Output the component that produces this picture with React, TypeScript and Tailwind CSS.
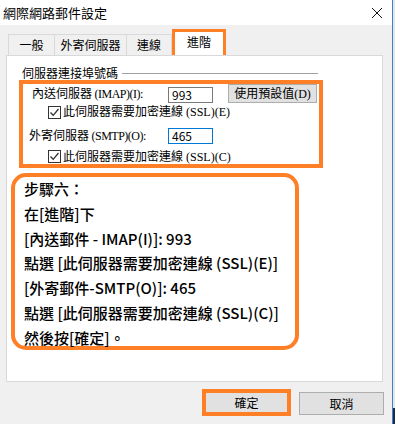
import React from 'react';

const ui = { fontFamily: '"Noto Sans CJK TC", "Noto Sans", sans-serif' };
const ming = { fontFamily: '"Liberation Serif", "Noto Sans CJK TC", serif' };

function Check() {
  return (
    <span className="flex h-[13px] w-[13px] items-center justify-center border border-[#333] bg-white">
      <svg width="11" height="11" viewBox="0 0 11 11">
        <path d="M1.5 5.5 L4.2 8.3 L9.5 2" fill="none" stroke="#333" strokeWidth="1.3" />
      </svg>
    </span>
  );
}

export default function App() {
  return (
    <div className="flex h-[424px] w-[395px] overflow-hidden bg-[#f0f0f0]" style={ui}>
      <div className="flex w-[392px] flex-col">
        {/* title bar */}
        <div className="flex h-[25px] items-center justify-between bg-white pl-[3px] pr-[9px]">
          <span className="text-[13px] text-black">網際網路郵件設定</span>
          <svg width="12" height="12" viewBox="0 0 12 12">
            <path d="M1 1 L11 11 M11 1 L1 11" stroke="#111" strokeWidth="1" />
          </svg>
        </div>

        {/* tabs */}
        <div className="ml-[8px] mt-[9px] flex h-[21px] text-[12px] text-black">
          <div className="flex w-[47px] items-center justify-center border border-b-0 border-[#d9d9d9] bg-[#f0f0f0]">一般</div>
          <div className="flex w-[72px] items-center justify-center border border-b-0 border-l-0 border-[#d9d9d9] bg-[#f0f0f0]">外寄伺服器</div>
          <div className="flex w-[45px] items-center justify-center border border-b-0 border-l-0 border-[#d9d9d9] bg-[#f0f0f0]">連線</div>
          <div className="-mt-[2px] ml-[3px] flex h-[23px] w-[48px] items-center justify-center bg-white pb-[3px] outline-[3px] outline-[#ff7f27]">進階</div>
        </div>

        {/* panel */}
        <div className="ml-[6px] flex h-[327px] w-[377px] flex-col border border-[#d9d9d9] bg-white">
          <div className="mt-[9px] flex items-center pl-[15px] pr-[64px]">
            <span className="text-[12px] leading-[16px] text-black">伺服器連接埠號碼</span>
            <div className="ml-[4px] h-px flex-1 bg-[#a0a0a0]" />
          </div>

          <div className="ml-[12px] mt-[-1px] flex h-[88px] w-[304px] flex-col border-4 border-[#ff7f27] text-[12px] text-black" style={ming}>
            <div className="flex h-[21px] items-center">
              <span className="ml-[9px] w-[136px]">
                內送伺服器<span className="tracking-[-0.5px]"> (IMAP)(I):</span>
              </span>
              <div className="mt-[2px] flex h-[16px] w-[45px] items-center border border-[#7a7a7a] pl-[3px] text-[12px]" style={ui}>993</div>
              <div className="ml-[15px] flex h-[19px] w-[89px] items-center justify-center border border-[#adadad] bg-[#e1e1e1]">使用預設值(D)</div>
            </div>
            <div className="ml-[25px] mt-[1px] flex h-[15px] items-center gap-[2px]">
              <Check />
              <span>此伺服器需要加密連線 (SSL)(E)</span>
            </div>
            <div className="mt-[7px] flex h-[20px] items-center">
              <span className="ml-[6px] w-[139px]">
                外寄伺服器<span className="tracking-[-0.5px]"> (SMTP)(O):</span>
              </span>
              <div className="flex h-[16px] w-[45px] items-center border border-[#0078d7] pl-[3px] text-[12px]" style={ui}>465</div>
            </div>
            <div className="ml-[25px] mt-[3px] flex h-[15px] items-center gap-[2px]">
              <Check />
              <span>此伺服器需要加密連線 (SSL)(C)</span>
            </div>
          </div>

          <div className="ml-[4px] mt-[5px] h-[177px] w-[288px] rounded-[15px] border-4 border-[#ff7f27] pl-[9px] text-[15px] font-medium leading-[24.8px] text-black">
            <div>步驟六：</div>
            <div>在[進階]下</div>
            <div>[內送郵件 - IMAP(I)]: 993</div>
            <div>點選 [此伺服器需要加密連線 (SSL)(E)]</div>
            <div>[外寄郵件-SMTP(O)]: 465</div>
            <div>點選 [此伺服器需要加密連線 (SSL)(C)]</div>
            <div>然後按[確定]。</div>
          </div>
        </div>

        {/* buttons */}
        <div className="ml-[202px] mt-[7px] flex items-start gap-[8px] text-[12px] text-black">
          <div className="flex h-[27px] w-[89px] items-center justify-center border-4 border-[#ff7f27] bg-[#e1e1e1]">確定</div>
          <div className="mt-[3px] flex h-[23px] w-[85px] items-center justify-center border border-[#adadad] bg-[#e1e1e1]">取消</div>
        </div>
      </div>

      {/* window edge / desktop behind */}
      <div className="w-px bg-[#3d7fcc]" />
      <div className="flex w-[2px] flex-col">
        <div className="flex-1 bg-[#e6e6e6]" />
        <div className="h-[16px] bg-[#1b2b4b]" />
      </div>
    </div>
  );
}
